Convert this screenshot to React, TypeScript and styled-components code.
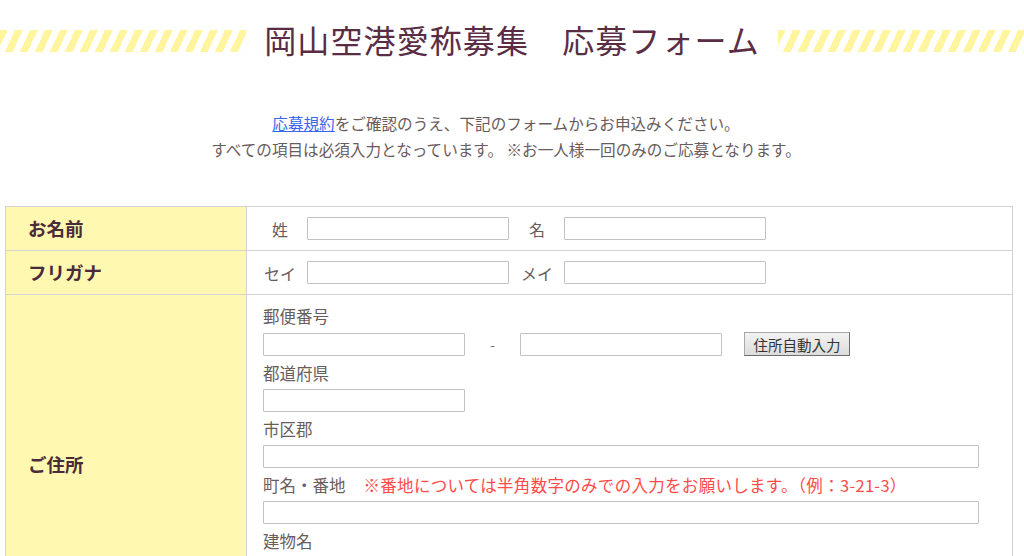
import * as React from 'react';
import styled, { createGlobalStyle } from 'styled-components';

const GlobalStyle = createGlobalStyle`
  html, body {
    margin: 0;
    padding: 0;
    background: #ffffff;
  }
  body {
    font-family: 'Noto Sans CJK JP', 'Noto Sans', sans-serif;
    color: #665757;
  }
`;

const Page = styled.div`
  width: 1024px;
  padding-top: 16px;
`;

const Header = styled.div`
  display: flex;
  align-items: center;
  gap: 18px;
`;

const Stripe = styled.div`
  flex: 1;
  height: 22px;
  margin-top: 4px;
  background: repeating-linear-gradient(
    115deg,
    #fff59e 0px,
    #fff59e 7px,
    #ffffff 7px,
    #ffffff 13.6px
  );
`;

const Title = styled.h1`
  margin: 0;
  font-size: 32px;
  line-height: 46px;
  font-weight: 400;
  letter-spacing: 1.1px;
  color: #5a2d45;
  white-space: nowrap;
`;

const Intro = styled.div`
  margin-top: 48px;
  padding-right: 12px;
  text-align: center;
  font-size: 15.6px;
  line-height: 26px;
  color: #6a5b5b;
`;

const Link = styled.a`
  color: #3a66f0;
  text-decoration: underline;
`;

const FormTable = styled.div`
  margin: 44px 11px 0 5px;
  border: 1px solid #d2d2d2;
  border-bottom: none;
`;

const Row = styled.div<{ $minHeight?: number }>`
  display: grid;
  grid-template-columns: 241px 1fr;
  border-bottom: 1px solid #d2d2d2;
  min-height: ${(p) => p.$minHeight ?? 43}px;
`;

const LabelCell = styled.div`
  display: flex;
  align-items: center;
  padding-left: 22px;
  padding-bottom: 2px;
  background: #fff8b0;
  border-right: 1px solid #d2d2d2;
  font-size: 18.5px;
  font-weight: 700;
  color: #4a2b3a;
`;

const FieldCell = styled.div`
  display: flex;
  align-items: center;
  padding-left: 16px;
`;

const StackCell = styled.div`
  display: flex;
  flex-direction: column;
  align-items: flex-start;
  padding: 9px 0 40px 16px;
`;

const PairLabel = styled.span`
  width: 34px;
  margin-right: 10px;
  text-align: center;
  font-size: 16px;
  color: #6a5c5c;
`;

const TextInput = styled.input<{ $wide?: boolean }>`
  box-sizing: border-box;
  width: ${(p) => (p.$wide ? 716 : 202)}px;
  height: 23px;
  margin: 0 11px 0 0;
  padding: 0 4px;
  border: 1px solid #c2c2c2;
  border-radius: 1px;
  background: #ffffff;
  font-family: inherit;
`;

const FieldLabel = styled.div`
  margin-top: 5px;
  font-size: 16.5px;
  line-height: 24px;
  color: #6a5c5c;
  white-space: nowrap;

  &:first-child {
    margin-top: 0;
  }
`;

const Note = styled.span`
  margin-left: 18px;
  letter-spacing: 0.3px;
  color: #ff4a4a;
`;

const InputLine = styled.div`
  display: flex;
  align-items: center;
  margin-top: 4px;
`;

const Dash = styled.span`
  width: 55px;
  margin-left: -11px;
  text-align: center;
  font-size: 14px;
  color: #777;
`;

const AutoButton = styled.button`
  box-sizing: border-box;
  height: 24px;
  width: 106px;
  margin-left: 11px;
  padding: 0;
  border: 1px solid #a8a8a8;
  border-right-color: #6e6e6e;
  border-bottom-color: #6e6e6e;
  background: linear-gradient(#f2f2f2, #dcdcdc);
  font-family: inherit;
  font-size: 14.5px;
  color: #333;
`;

const nameRows = [
  { title: 'お名前', first: '姓', second: '名' },
  { title: 'フリガナ', first: 'セイ', second: 'メイ' },
];

export default function App() {
  return (
    <Page>
      <GlobalStyle />
      <Header>
        <Stripe />
        <Title>岡山空港愛称募集　応募フォーム</Title>
        <Stripe />
      </Header>
      <Intro>
        <Link href="#">応募規約</Link>をご確認のうえ、下記のフォームからお申込みください。
        <br />
        すべての項目は必須入力となっています。 ※お一人様一回のみのご応募となります。
      </Intro>
      <FormTable>
        {nameRows.map((row) => (
          <Row key={row.title}>
            <LabelCell>{row.title}</LabelCell>
            <FieldCell>
              <PairLabel>{row.first}</PairLabel>
              <TextInput />
              <PairLabel>{row.second}</PairLabel>
              <TextInput />
            </FieldCell>
          </Row>
        ))}
        <Row $minHeight={340}>
          <LabelCell>ご住所</LabelCell>
          <StackCell>
            <FieldLabel>郵便番号</FieldLabel>
            <InputLine>
              <TextInput />
              <Dash>-</Dash>
              <TextInput />
              <AutoButton type="button">住所自動入力</AutoButton>
            </InputLine>
            <FieldLabel>都道府県</FieldLabel>
            <InputLine>
              <TextInput />
            </InputLine>
            <FieldLabel>市区郡</FieldLabel>
            <InputLine>
              <TextInput $wide />
            </InputLine>
            <FieldLabel>
              町名・番地
              <Note>※番地については半角数字のみでの入力をお願いします。（例：3-21-3）</Note>
            </FieldLabel>
            <InputLine>
              <TextInput $wide />
            </InputLine>
            <FieldLabel>建物名</FieldLabel>
            <InputLine>
              <TextInput $wide />
            </InputLine>
          </StackCell>
        </Row>
      </FormTable>
    </Page>
  );
}
